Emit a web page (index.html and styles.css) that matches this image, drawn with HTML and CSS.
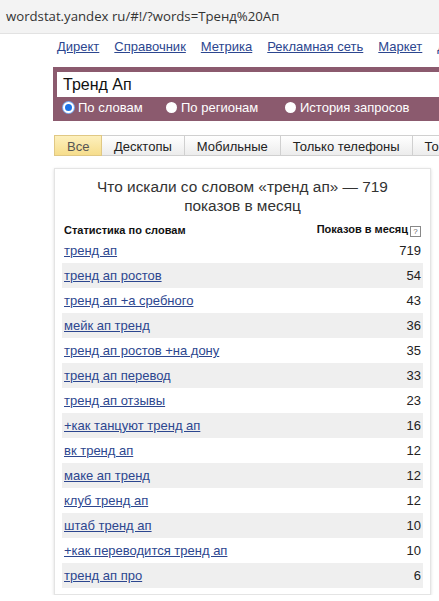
FILE: index.html
```html
<!DOCTYPE html>
<html lang="ru">
<head>
<meta charset="utf-8">
<link rel="stylesheet" href="styles.css">
</head>
<body>
<div class="addr">wordstat.yandex ru/#!/?words=Тренд%20Ап</div>
<div class="page">
  <nav class="services">
    <a href="#">Директ</a>
    <a href="#">Справочник</a>
    <a href="#">Метрика</a>
    <a href="#">Рекламная сеть</a>
    <a href="#">Маркет</a>
    <a href="#">Д</a>
  </nav>
  <div class="search">
    <div class="input">Тренд Ап</div>
    <div class="radios">
      <span class="radio on"><i></i>По словам</span>
      <span class="radio"><i></i>По регионам</span>
      <span class="radio"><i></i>История запросов</span>
    </div>
  </div>
  <div class="tabs">
    <span class="tab active">Все</span>
    <span class="tab">Десктопы</span>
    <span class="tab">Мобильные</span>
    <span class="tab">Только телефоны</span>
    <span class="tab">То</span>
  </div>
  <div class="card">
    <div class="title">Что искали со словом «тренд ап» — 719<br>показов в месяц</div>
    <table class="stats">
      <tr class="head"><th class="l">Статистика по словам</th><th class="r">Показов в месяц<span class="q">?</span></th></tr>
      <tr><td><a href="#">тренд ап</a></td><td class="n">719</td></tr>
      <tr class="g"><td><a href="#">тренд ап ростов</a></td><td class="n">54</td></tr>
      <tr><td><a href="#">тренд ап +а сребного</a></td><td class="n">43</td></tr>
      <tr class="g"><td><a href="#">мейк ап тренд</a></td><td class="n">36</td></tr>
      <tr><td><a href="#">тренд ап ростов +на дону</a></td><td class="n">35</td></tr>
      <tr class="g"><td><a href="#">тренд ап перевод</a></td><td class="n">33</td></tr>
      <tr><td><a href="#">тренд ап отзывы</a></td><td class="n">23</td></tr>
      <tr class="g"><td><a href="#">+как танцуют тренд ап</a></td><td class="n">16</td></tr>
      <tr><td><a href="#">вк тренд ап</a></td><td class="n">12</td></tr>
      <tr class="g"><td><a href="#">маке ап тренд</a></td><td class="n">12</td></tr>
      <tr><td><a href="#">клуб тренд ап</a></td><td class="n">12</td></tr>
      <tr class="g"><td><a href="#">штаб тренд ап</a></td><td class="n">10</td></tr>
      <tr><td><a href="#">+как переводится тренд ап</a></td><td class="n">10</td></tr>
      <tr class="g"><td><a href="#">тренд ап про</a></td><td class="n">6</td></tr>
    </table>
  </div>
</div>
</body>
</html>
```
FILE: styles.css
```css
html, body {
  margin: 0;
  padding: 0;
  background: #fff;
  overflow: hidden;
}
body {
  font-family: "Liberation Sans", Arial, sans-serif;
  color: #000;
  width: 439px;
}
.addr {
  height: 33px;
  line-height: 32px;
  background: #f3f3f3;
  border-bottom: 1px solid #e2e2e2;
  padding-left: 6px;
  font-family: "Open Sans", sans-serif;
  font-size: 13.2px;
  color: #333;
  white-space: nowrap;
}
.page {
  padding-left: 53px;
}
.services {
  display: flex;
  gap: 15px;
  padding: 4px 0 0 4px;
  height: 29px;
  white-space: nowrap;
  overflow: hidden;
}
.services a {
  color: #2c468f;
  font-size: 13px;
  line-height: 17px;
}
.search {
  background: #8b5a6e;
  height: 54px;
  padding: 5px 0 0 4px;
  box-sizing: border-box;
}
.input {
  background: #fff;
  height: 25px;
  line-height: 25px;
  padding-left: 6px;
  font-size: 16px;
  color: #111;
}
.radios {
  display: flex;
  height: 21px;
  align-items: center;
  padding-left: 6px;
}
.radio {
  display: flex;
  align-items: center;
  color: #fff;
  font-size: 13px;
  white-space: nowrap;
}
.radio:nth-child(1) { width: 103px; }
.radio:nth-child(2) { width: 119px; }
.radio i {
  width: 11px;
  height: 11px;
  border-radius: 50%;
  background: #fff;
  margin-right: 4px;
  box-sizing: border-box;
}
.radio.on i {
  background: #1a73e8;
  border: 2px solid #fff;
  box-shadow: 0 0 0 1px #7aaaf0;
}
.tabs {
  display: flex;
  margin-top: 14px;
  margin-left: 1px;
  height: 21px;
  white-space: nowrap;
  overflow: hidden;
}
.tab {
  flex: none;
  font-size: 13px;
  line-height: 21px;
  padding: 0 12px;
  border: 1px solid #d0d0d0;
  border-left: none;
  background: linear-gradient(#ffffff, #ececec);
  color: #222;
}
.tab:first-child {
  border-left: 1px solid #d0d0d0;
}
.tab.active {
  background: linear-gradient(#fdf0bd, #f6dd8c);
  border-color: #e0c884;
  color: #555;
  width: 22px;
}
.card {
  margin-top: 12px;
  margin-left: 1px;
  width: 377px;
  border: 1px solid #e4e4e4;
  box-shadow: 0 1px 3px rgba(0,0,0,0.15);
  padding: 8px 7px 6px 7px;
  box-sizing: border-box;
}
.title {
  text-align: center;
  font-size: 15.4px;
  line-height: 19px;
  color: #333;
  padding: 0 0 6px;
}
.stats {
  width: 100%;
  border-collapse: collapse;
}
.stats th {
  font-size: 11px;
  font-weight: bold;
  color: #111;
  height: 17px;
  padding: 0 2px 0 2px;
  vertical-align: middle;
}
.stats th.l { text-align: left; }
.stats th.r { text-align: right; }
.q {
  display: inline-block;
  width: 9px;
  height: 9px;
  border: 1px solid #888;
  font-size: 8px;
  line-height: 9px;
  text-align: center;
  color: #666;
  margin-left: 2px;
  vertical-align: -1px;
  font-weight: normal;
}
.stats td {
  height: 25px;
  font-size: 13px;
  padding: 0 2px 0 2px;
  vertical-align: middle;
}
.stats tr.g td {
  background: #efefef;
}
.stats a {
  color: #2c468f;
}
.stats td.n {
  text-align: right;
  color: #222;
}
```
